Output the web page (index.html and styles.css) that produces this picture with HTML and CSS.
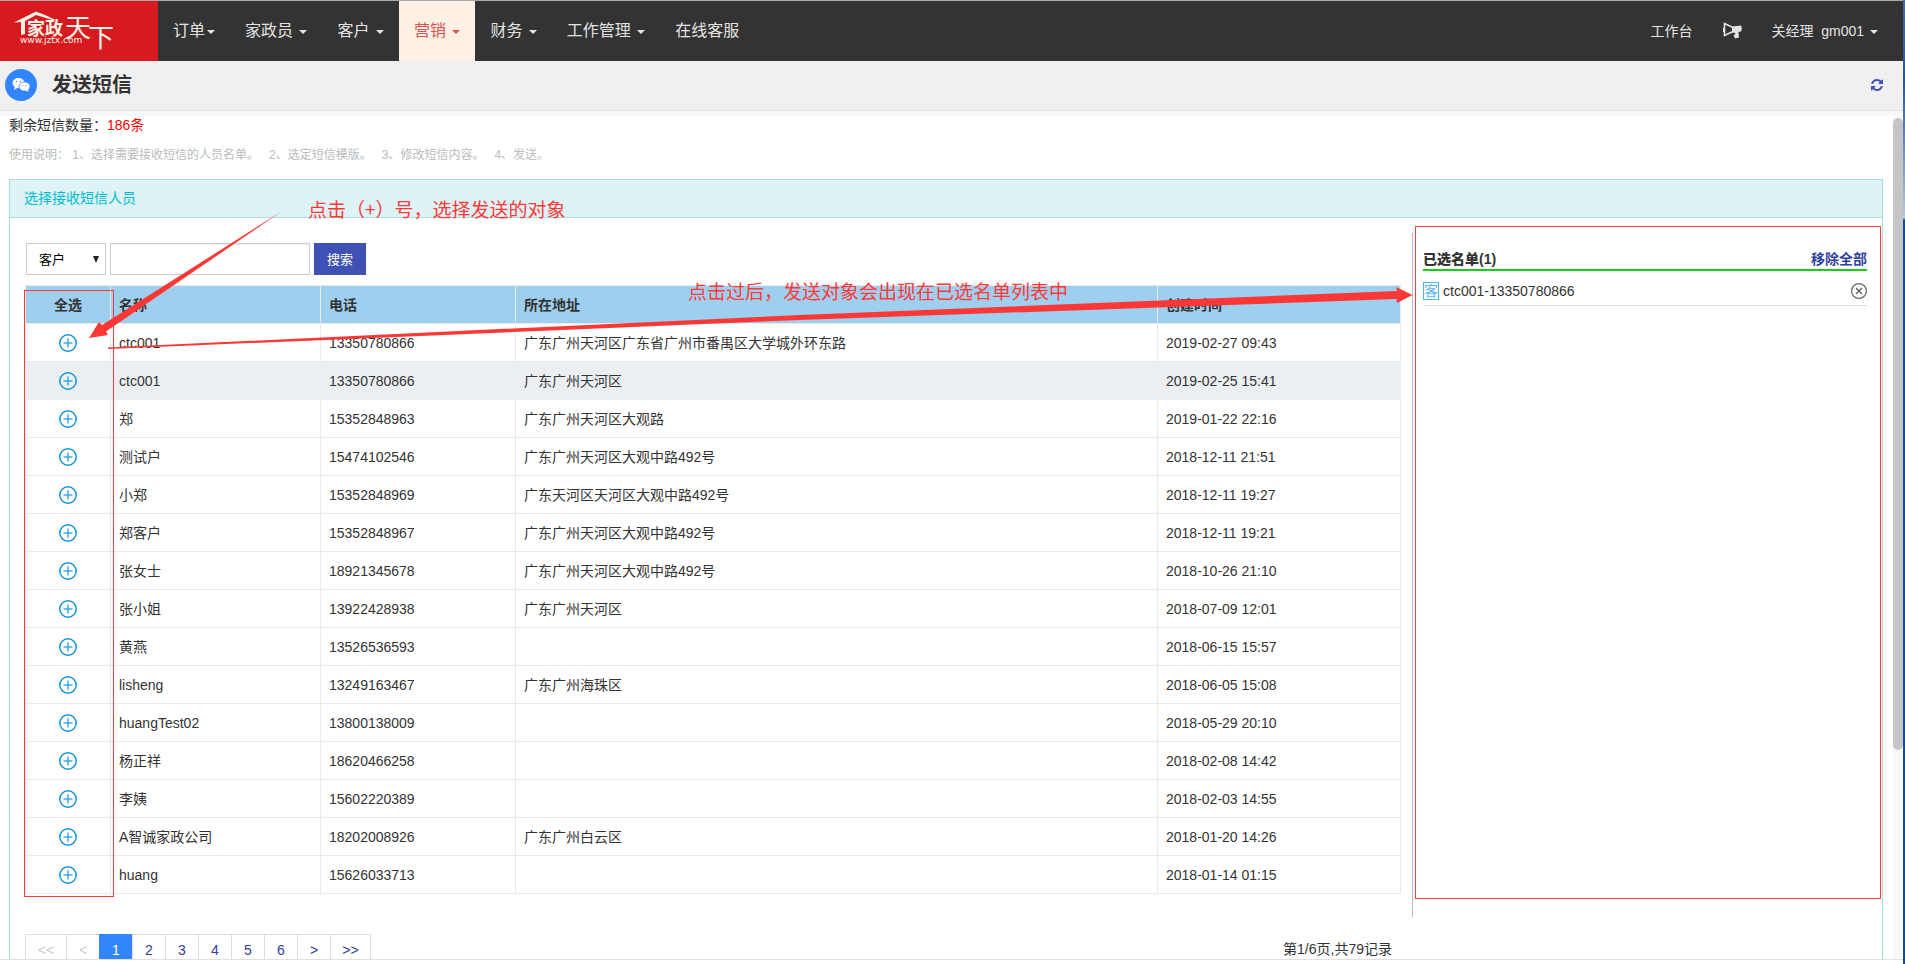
FILE: index.html
```
<!DOCTYPE html>
<html lang="zh-CN">
<head>
<meta charset="utf-8">
<title>发送短信</title>
<link rel="stylesheet" href="styles.css">
</head>
<body>
<div class="app">
  <header class="navbar">
    <a class="logo" href="#" aria-label="家政天下">
      <svg width="158" height="60" viewBox="0 0 158 60">
        <path d="M14 21.500Q27 15 36 10.500Q46 14 56 19L52 19Q43 16 36 14Q29 18 25 20L25 33L21 34L21 21Z" fill="#fff3e4"/>
        <text class="logo-small" x="27" y="34">家政</text>
        <text class="logo-big" x="65" y="36">天</text>
        <text class="logo-big" x="88" y="46">下</text>
        <text class="logo-url" x="20" y="42">www.jztx.com</text>
      </svg>
    </a>
    <nav class="menu">
      <a href="#">订单<i class="caret"></i></a>
      <a href="#">家政员 <i class="caret"></i></a>
      <a href="#">客户 <i class="caret"></i></a>
      <a href="#" class="active">营销 <i class="caret"></i></a>
      <a href="#">财务 <i class="caret"></i></a>
      <a href="#">工作管理 <i class="caret"></i></a>
      <a href="#">在线客服</a>
    </nav>
    <nav class="user-menu">
      <a href="#">工作台</a>
      <a href="#" aria-label="公告">
        <svg width="19" height="18" viewBox="0 0 19 18"><path d="M1.500 1.500L10 5.500V9.500L1.500 13.500Z" fill="none" stroke="#e3e3e3" stroke-width="1.600"/><path d="M0 6H2V10H0ZM9 4.500L18 3.500Q19.500 6.500 18 9.500L15.500 10L16 15.500L12 16.500L10.500 13L12.500 12L11.500 10.500L9 11Z" fill="#e3e3e3"/></svg>
      </a>
      <a href="#">关经理 &nbsp;gm001 <i class="caret"></i></a>
    </nav>
  </header>

  <div class="title-bar">
    <svg class="title-icon" width="32" height="32" viewBox="0 0 32 32"><circle cx="16" cy="16" r="16" fill="#3385ff"/><ellipse cx="13.500" cy="14" rx="6" ry="5" fill="#fff"/><path d="M10 17L9 21L13 18.500Z" fill="#fff"/><ellipse cx="19.500" cy="17.500" rx="5.500" ry="4.500" fill="#fff" stroke="#3385ff" stroke-width="0.700"/><path d="M20 21L23.500 23L23 20Z" fill="#fff"/><g fill="#3385ff"><circle cx="11.500" cy="12.500" r=".7"/><circle cx="15.500" cy="12.500" r=".7"/><circle cx="17.700" cy="16.500" r=".6"/><circle cx="21.300" cy="16.500" r=".6"/></g></svg>
    <h1>发送短信</h1>
    <a class="refresh" href="#" aria-label="刷新">
      <svg width="12" height="12" viewBox="0 0 1536 1536"><path fill="#3f51b5" d="M1511 928q0 5-1 7-64 268-268 434.500T764 1536q-146 0-282.500-55T238 1324l-129 129q-19 19-45 19t-45-19-19-45V960q0-26 19-45t45-19h448q26 0 45 19t19 45-19 45l-137 137q71 66 161 102t187 36q134 0 250-65t186-179q11-17 53-117 8-23 30-23h192q13 0 22.500 9.500t9.500 22.500zm25-800v448q0 26-19 45t-45 19h-448q-26 0-45-19t-19-45 19-45l138-138Q969 256 768 256q-134 0-250 65T332 500q-11 17-53 117-8 23-30 23H50q-13 0-22.500-9.500T18 608v-7q65-268 270-434.500T768 0q146 0 284 55.500T1297 212l130-129q19-19 45-19t45 19 19 45z"/></svg>
    </a>
  </div>

  <main class="content">
    <p class="quota">剩余短信数量：<span>186条</span></p>
    <p class="guide"><span>使用说明： 1、选择需要接收短信的人员名单。</span><span>2、选定短信模版。</span><span>3、修改短信内容。</span><span>4、发送。</span></p>
    <section class="panel">
      <h2>选择接收短信人员</h2>
      <div class="panel-body">
        <div class="picker">
          <form class="search">
            <select aria-label="类型"><option>客户</option></select>
            <input type="text" aria-label="关键字">
            <button type="button">搜索</button>
          </form>
          <table>
            <colgroup><col class="c-pick"><col class="c-name"><col class="c-phone"><col class="c-addr"><col class="c-time"></colgroup>
            <thead><tr><th>全选</th><th>名称</th><th>电话</th><th>所在地址</th><th>创建时间</th></tr></thead>
            <tbody id="rows"></tbody>
          </table>
          <div class="pager">
            <nav class="pages" aria-label="分页">
              <a class="off wide" href="#">&lt;&lt;</a><a class="off" href="#">&lt;</a><a class="on" href="#">1</a><a href="#">2</a><a href="#">3</a><a href="#">4</a><a href="#">5</a><a href="#">6</a><a href="#">&gt;</a><a class="wide" href="#">&gt;&gt;</a>
            </nav>
            <span>第1/6页,共79记录</span>
          </div>
        </div>
        <aside class="selected">
          <div class="selected-head"><strong>已选名单(1)</strong><a href="#">移除全部</a></div>
          <div class="selected-item">
            <span class="badge">客</span><span class="who">ctc001-13350780866</span>
            <button type="button" aria-label="移除"><svg width="16" height="16" viewBox="0 0 16 16"><circle cx="8" cy="8" r="7.400" fill="none" stroke="#666" stroke-width="1.200"/><path d="M5 5L11 11M11 5L5 11" stroke="#666" stroke-width="1.500"/></svg></button>
          </div>
        </aside>
      </div>
    </section>
    <div class="scrollbar"><div class="thumb"></div></div>
  </main>
  <footer class="footer"></footer>
  <div class="window-edge"></div>

  <svg class="notes" width="1905" height="964" viewBox="0 0 1905 964">
    <g fill="none" stroke="#ff3838"><rect x="24.500" y="290.500" width="89" height="606"/><rect x="1415.500" y="226.500" width="465" height="672"/></g>
    <g fill="#fc3836"><path d="M283 210.500L102 325L99 322L89 338L108 335L106 331.500Z"/><path d="M108 347.500L800 315L1397 291L1396 287L1412.500 295L1397 303L1396.500 299L800 320L108 349Z"/></g>
    <text x="308" y="217">点击（+）号，选择发送的对象</text>
    <text x="688" y="299">点击过后，发送对象会出现在已选名单列表中</text>
  </svg>
</div>
<script src="rows.js"></script>
</body>
</html>
```
FILE: styles.css
```
* { box-sizing: border-box; }
body {
  margin: 0;
  font: 14px/20px "Liberation Sans", "Noto Sans CJK SC", sans-serif;
  color: #333;
  background: #fff;
}
a { color: #303f9f; text-decoration: none; }
h1, h2, p { margin: 0; }
svg { display: block; }

.app {
  position: relative;
  display: flex;
  flex-direction: column;
  height: 100vh;
  padding-right: 2px;
  overflow: hidden;
}
.window-edge {
  position: absolute;
  top: 0;
  right: 0;
  bottom: 0;
  width: 2px;
  background: linear-gradient(#4a6a94 0, #2f568b 80px, #b9c6d8 218px, #1b4a87 220px);
}

.navbar {
  display: flex;
  flex: none;
  height: 61px;
  border-top: 1px solid #a9a9a9;
  background: #333;
}
.logo { width: 158px; background: #d71920; }
.logo text { fill: #fff3e4; font-family: "Noto Sans CJK SC", sans-serif; font-weight: bold; }
.logo .logo-small { font-size: 18px; }
.logo .logo-big { font-size: 26px; font-weight: normal; }
.logo .logo-url { font: 9px "DejaVu Sans", sans-serif; }
.menu, .user-menu { display: flex; }
.menu a, .user-menu a {
  display: block;
  padding: 0 15px;
  line-height: 48px;
  color: #e3e3e3;
}
.menu a { font-size: 16px; line-height: 60px; }
.menu .active { color: #d9534f; background: #fff0e6; }
.user-menu { align-items: center; margin-left: auto; padding-right: 10px; }
.caret {
  display: inline-block;
  margin-left: 2px;
  vertical-align: middle;
  border: 4px solid transparent;
  border-top-color: currentColor;
  border-bottom: 0;
}

.title-bar {
  display: flex;
  flex: none;
  align-items: center;
  height: 50px;
  padding: 0 20px 2px 5px;
  background: #f0f0f0;
  border-bottom: 1px solid #e3e3e3;
}
.title-bar h1 { margin-left: 15px; font-size: 20px; line-height: 30px; }
.refresh { margin-left: auto; }

.content {
  position: relative;
  flex: 1;
  min-height: 0;
  overflow: hidden;
  padding: 4px 20px 0 9px;
  background: linear-gradient(#f7f8fa 5px, #fff 5px);
}
.quota { line-height: 20px; }
.quota span { color: #f00; }
.guide { display: flex; gap: 10px; margin: 10px 0 14px; font-size: 12px; color: #bbb; }

.panel { border: 1px solid #a0e3da; }
.panel h2 {
  padding: 0 14px;
  font-size: 14px;
  font-weight: normal;
  line-height: 37px;
  color: #00bcd4;
  background: #ddf3f5;
  border-bottom: 1px solid #a0e3da;
}
.panel-body { display: flex; align-items: flex-start; padding-top: 15px; }
.picker { flex: 1; min-width: 0; padding: 10px 11px 0 15px; }
.search { display: flex; gap: 4px; margin: 0 0 10px 1px; }
.search select, .search input {
  height: 32px;
  border: 1px solid #ccc;
  background: #fff;
  color: #000;
  font: 13px "Liberation Sans", "Noto Sans CJK SC", sans-serif;
}
.search select {
  width: 80px;
  padding: 0 12px;
  appearance: none;
  background: url("data:image/svg+xml,%3Csvg xmlns='http://www.w3.org/2000/svg' width='6' height='7'%3E%3Cpath d='M0 0H6L3 7Z' fill='%23222'/%3E%3C/svg%3E") no-repeat right 6px center #fff;
}
.search input { width: 200px; box-shadow: inset 0 1px 1px #eee; }
.search button {
  width: 52px;
  height: 32px;
  padding: 0 0 2px;
  border: 0;
  color: #fff;
  background: #3f51b5;
  font: 13px "Liberation Sans", "Noto Sans CJK SC", sans-serif;
}

table { width: 100%; table-layout: fixed; border-collapse: collapse; }
.c-pick { width: 85px; }
.c-name { width: 210px; }
.c-phone { width: 195px; }
.c-time { width: 243px; }
th, td { height: 38px; padding: 0 8px; border: 1px solid #eaeaea; text-align: left; }
th { background: #9fcfef; }
th:first-child { text-align: center; }
tbody tr:nth-child(2) td { background: #ebeff2; border-color: #ebeff2; }
td button, .selected button { display: block; padding: 0; border: 0; background: none; }
td button { margin: 0 auto; }

.pager { display: flex; justify-content: space-between; margin-top: 40px; padding-right: 9px; line-height: 30px; }
.pages { display: flex; }
.pages a {
  width: 33px;
  height: 34px;
  border: 1px solid #ddd;
  border-right: 0;
  text-align: center;
}
.pages .wide { width: 41px; }
.pages a:last-child { border-right: 1px solid #ddd; }
.pages .off { color: #ccc; }
.pages .on { color: #fff; background: #3385ff; border-color: #3385ff; }

.selected {
  flex: 0 0 calc(25% + 2px);
  height: 684px;
  padding: 16px 15px 0 10px;
  border-left: 1px solid #bbb;
}
.selected-head {
  display: flex;
  justify-content: space-between;
  font-weight: bold;
  border-bottom: 2px solid #14cf14;
}
.selected-item { display: flex; align-items: center; padding: 10px 0 4px; border-bottom: 1px solid #ddd; }
.selected-item .badge {
  width: 16px;
  height: 18px;
  border: 1px solid #4eb5f5;
  color: #4eb5f5;
  line-height: 16px;
  font-size: 14px;
}
.selected-item .who { margin: 0 auto 0 4px; }

.scrollbar { position: absolute; top: 5px; right: 0; bottom: 0; width: 10px; background: #f7f8fa; }
.thumb { height: 75%; margin-top: 2px; border-radius: 5px; background: #c5c5c7; }
.footer { flex: none; height: 5px; border-top: 1px solid #e0e0e0; background: #fff; }

.notes { position: absolute; top: 0; left: 0; pointer-events: none; }
.notes text { fill: #ff3838; font: 19px "Noto Sans CJK SC", sans-serif; }
```
FILE: rows.js
```
const people = [
  ["ctc001", "13350780866", "广东广州天河区广东省广州市番禺区大学城外环东路", "2019-02-27 09:43"],
  ["ctc001", "13350780866", "广东广州天河区", "2019-02-25 15:41"],
  ["郑", "15352848963", "广东广州天河区大观路", "2019-01-22 22:16"],
  ["测试户", "15474102546", "广东广州天河区大观中路492号", "2018-12-11 21:51"],
  ["小郑", "15352848969", "广东天河区天河区大观中路492号", "2018-12-11 19:27"],
  ["郑客户", "15352848967", "广东广州天河区大观中路492号", "2018-12-11 19:21"],
  ["张女士", "18921345678", "广东广州天河区大观中路492号", "2018-10-26 21:10"],
  ["张小姐", "13922428938", "广东广州天河区", "2018-07-09 12:01"],
  ["黄燕", "13526536593", "", "2018-06-15 15:57"],
  ["lisheng", "13249163467", "广东广州海珠区", "2018-06-05 15:08"],
  ["huangTest02", "13800138009", "", "2018-05-29 20:10"],
  ["杨正祥", "18620466258", "", "2018-02-08 14:42"],
  ["李姨", "15602220389", "", "2018-02-03 14:55"],
  ["A智诚家政公司", "18202008926", "广东广州白云区", "2018-01-20 14:26"],
  ["huang", "15626033713", "", "2018-01-14 01:15"]
];
const plus = '<button type="button" aria-label="选择"><svg width="18" height="18" viewBox="0 0 18 18" fill="none" stroke="#1296db"><circle cx="9" cy="9" r="8.200" stroke-width="1.500"/><path d="M9 4.500V13.500M4.500 9H13.500" stroke-width="1.500" opacity=".8"/></svg></button>';
document.getElementById("rows").innerHTML = people
  .map(p => "<tr><td>" + plus + "</td>" + p.map(v => "<td>" + v + "</td>").join("") + "</tr>")
  .join("");
```
